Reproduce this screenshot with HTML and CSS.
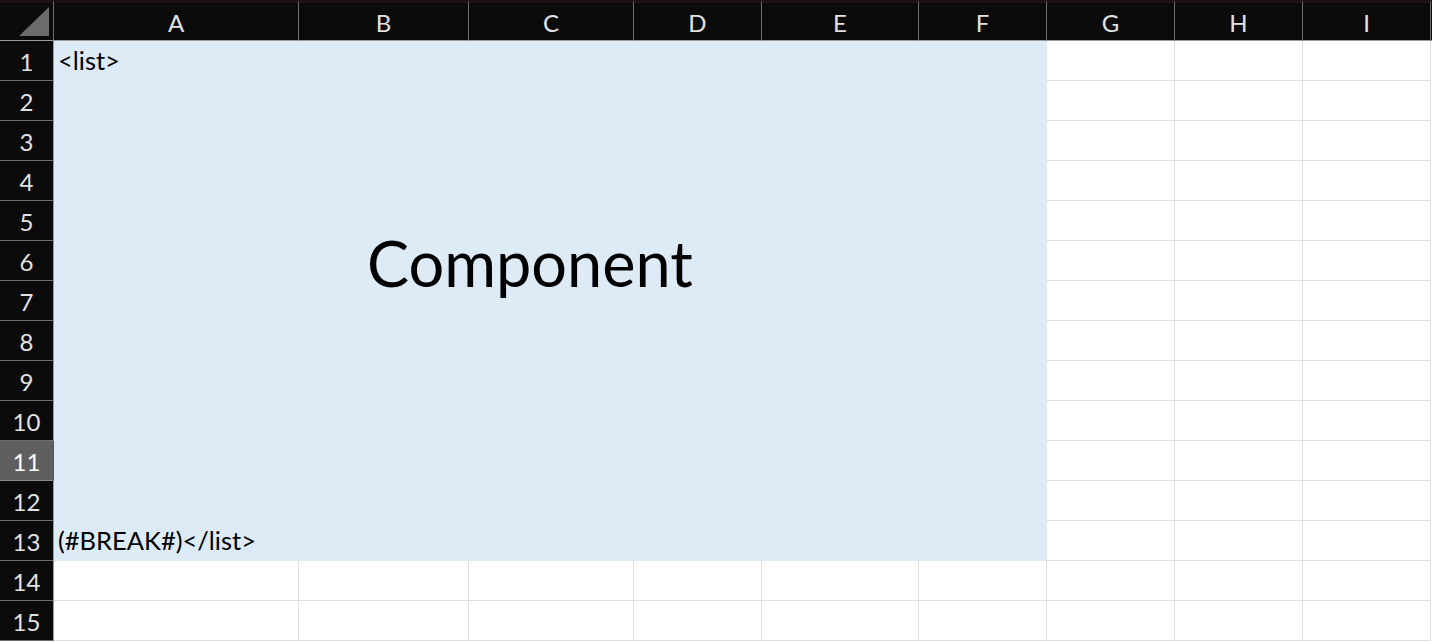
FILE: index.html
```html
<!DOCTYPE html>
<html>
<head>
<meta charset="utf-8">
<link rel="stylesheet" href="styles.css">
</head>
<body>
<div class="sheet">
  <div class="corner"><div class="tri"></div></div>
  <div class="ch">A</div>
  <div class="ch">B</div>
  <div class="ch">C</div>
  <div class="ch">D</div>
  <div class="ch">E</div>
  <div class="ch">F</div>
  <div class="ch">G</div>
  <div class="ch">H</div>
  <div class="ch">I</div>
  <div class="filler-top"></div>

  <div class="rh">1</div>
  <div class="block">
    <div class="cell-text">&lt;list&gt;</div>
    <div class="big">Component</div>
    <div class="cell-text">(#BREAK#)&lt;/list&gt;</div>
  </div>
  <div class="c"></div><div class="c"></div><div class="c"></div>
  <div class="rh">2</div><div class="c"></div><div class="c"></div><div class="c"></div>
  <div class="rh">3</div><div class="c"></div><div class="c"></div><div class="c"></div>
  <div class="rh">4</div><div class="c"></div><div class="c"></div><div class="c"></div>
  <div class="rh">5</div><div class="c"></div><div class="c"></div><div class="c"></div>
  <div class="rh">6</div><div class="c"></div><div class="c"></div><div class="c"></div>
  <div class="rh">7</div><div class="c"></div><div class="c"></div><div class="c"></div>
  <div class="rh">8</div><div class="c"></div><div class="c"></div><div class="c"></div>
  <div class="rh">9</div><div class="c"></div><div class="c"></div><div class="c"></div>
  <div class="rh">10</div><div class="c"></div><div class="c"></div><div class="c"></div>
  <div class="rh sel">11</div><div class="c"></div><div class="c"></div><div class="c"></div>
  <div class="rh">12</div><div class="c"></div><div class="c"></div><div class="c"></div>
  <div class="rh">13</div><div class="c"></div><div class="c"></div><div class="c"></div>
  <div class="rh">14</div><div class="c"></div><div class="c"></div><div class="c"></div><div class="c"></div><div class="c"></div><div class="c"></div><div class="c"></div><div class="c"></div><div class="c"></div>
  <div class="rh">15</div><div class="c"></div><div class="c"></div><div class="c"></div><div class="c"></div><div class="c"></div><div class="c"></div><div class="c"></div><div class="c"></div><div class="c"></div>
</div>
</body>
</html>
```
FILE: styles.css
```css
* { box-sizing: border-box; }
html, body { margin: 0; padding: 0; background: #ffffff; }
body { width: 1432px; height: 642px; overflow: hidden; font-family: Lato, "Open Sans", sans-serif; }

.sheet {
  display: grid;
  grid-template-columns: 54px 245px 170px 165px 128px 157px 128px 128px 128px 128px 1px;
  grid-template-rows: 41px repeat(15, 40px);
}

.corner {
  background: #0b0b0b;
  border-top: 3px solid #1a1214;
  border-right: 1px solid #6e6e6e;
  border-bottom: 1px solid #9c9c9c;
  position: relative;
}
.tri {
  position: absolute;
  right: 4px;
  bottom: 4px;
  width: 30px;
  height: 29px;
  background: #6b6b6b;
  clip-path: polygon(100% 0, 100% 100%, 0 100%);
}

.ch {
  background: #0b0b0b;
  color: #e2e2e2;
  border-top: 3px solid #1a1214;
  border-right: 1px solid #6e6e6e;
  border-bottom: 1px solid #9c9c9c;
  font-size: 24px;
  display: flex;
  align-items: center;
  justify-content: center;
  padding-top: 1px;
}
.filler-top { background: #0b0b0b; border-top: 3px solid #1a1214; border-bottom: 1px solid #9c9c9c; }

.rh {
  grid-column: 1;
  background: #0b0b0b;
  color: #e2e2e2;
  border-right: 1px solid #9c9c9c;
  border-bottom: 1px solid #6e6e6e;
  font-size: 24px;
  display: flex;
  align-items: center;
  justify-content: center;
  padding-top: 2px;
}
.rh.sel {
  background: #5f5f5f;
  color: #ffffff;
  border-right: 1px solid #217346;
  border-bottom: 1px solid #8a8a8a;
}

.c {
  border-right: 1px solid #dedede;
  border-bottom: 1px solid #dedede;
  background: #ffffff;
}

.block {
  grid-column: 2 / 8;
  grid-row: 2 / 15;
  background: #ddebf7;
  display: grid;
  grid-template-rows: 40px 1fr 40px;
  color: #000000;
}
.cell-text {
  font-size: 25.5px;
  line-height: 38px;
  padding-left: 4px;
}
.big {
  font-size: 63px;
  line-height: 80px;
  padding-left: 313px;
  padding-top: 142px;
}
```
